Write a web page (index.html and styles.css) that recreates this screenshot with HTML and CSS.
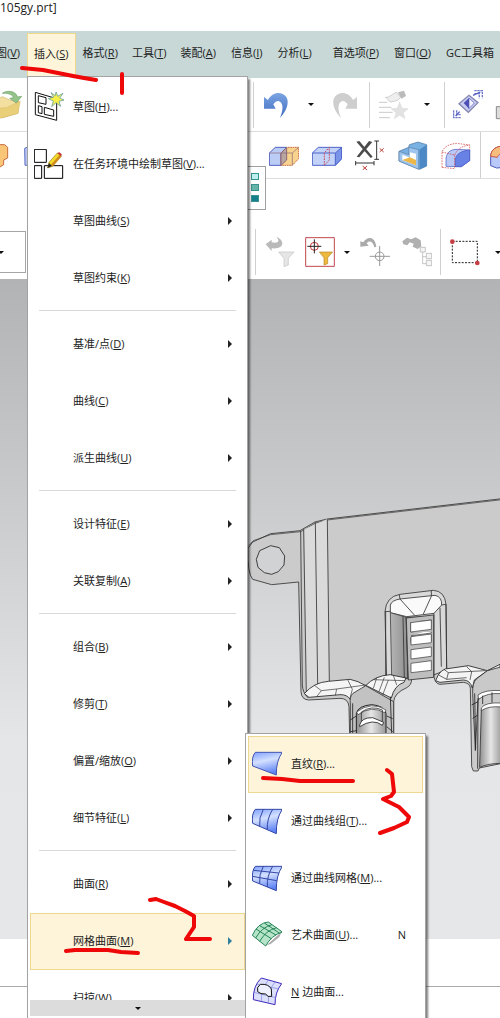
FILE: index.html
```html
<!DOCTYPE html>
<html lang="zh-CN">
<head>
<meta charset="utf-8">
<meta name="viewport" content="width=device-width, initial-scale=1">
<title>105gy.prt</title>
<link rel="stylesheet" href="styles.css">
</head>
<body>
<div class="app">
  <header class="title">105gy.prt]</header>

  <nav class="menubar">
    <button class="cut">图(<u>V</u>)</button>
    <button class="active">插入(<u>S</u>)</button>
    <button>格式(<u>R</u>)</button>
    <button>工具(<u>T</u>)</button>
    <button>装配(<u>A</u>)</button>
    <button>信息(<u>I</u>)</button>
    <button>分析(<u>L</u>)</button>
    <button class="wide">首选项(<u>P</u>)</button>
    <button>窗口(<u>O</u>)</button>
    <button>GC工具箱</button>
  </nav>

  <div class="bar bar-main">
    <div class="side">
      <button class="icon" aria-label="打开"><svg viewBox="-20 265 90 90">
        <path d="M-20 300L8 285 30 295 58 300 55 335 10 348-20 350Z" fill="#f3dfa0" stroke="#d3b866" stroke-width="2"/>
        <path d="M-20 320L20 318 62 298 55 335 8 348-20 349Z" fill="#e9cf78" stroke="#c9ad58"/>
        <path d="M8 275C22 264 50 268 53 286L66 284 50 304 30 290 42 288C36 276 22 274 8 275Z" fill="#94c48a" stroke="#6fa26a" stroke-width="2"/></svg></button>
    </div>
    <i class="sep"></i>
    <button class="icon" aria-label="撤销"><svg viewBox="36 270 90 90">
      <defs><linearGradient id="undo" x2="0" y2="1"><stop stop-color="#7ba4e2"/><stop offset="1" stop-color="#3f6cc0"/></linearGradient></defs>
      <path d="M42 291L54 300C64 282 82 275 98 282C119 291 120 322 90 354C99 332 101 312 90 305C82 300 75 307 70 313L77 326 42 326Z" fill="url(#undo)"/></svg></button>
    <button class="drop" aria-label="撤销列表"></button>
    <button class="icon" aria-label="重做"><svg viewBox="243 270 90 90">
      <path d="M324 291L312 300C302 282 284 275 268 282C247 291 246 322 276 354C267 332 265 312 276 305C284 300 291 307 296 313L289 326 324 326Z" fill="#cecece"/></svg></button>
    <i class="sep"></i>
    <button class="icon" aria-label="快速命令"><svg viewBox="384 270 90 90">
      <path d="M449 306L456 325 475 326 460 338 465 356 449 346 433 356 438 338 423 326 442 325Z" fill="#e2e2e2" stroke="#cfcfcf"/>
      <path d="M406 292C418 294 428 280 440 277L452 292 443 301 423 306C410 303 420 299 406 292Z" fill="#eee" stroke="#bbb" stroke-width="2"/>
      <path d="M444 277L462 272 468 288 454 296Z" fill="#bbb"/>
      <path d="M387 307H412M387 322H424M387 337H428M387 353H420" stroke="#cbcbcb" stroke-width="3"/></svg></button>
    <button class="drop" aria-label="命令列表"></button>
    <i class="sep"></i>
    <button class="icon" aria-label="适合窗口"><svg viewBox="612 268 90 90">
      <path d="M630 309L660 284 687 306 658 335Z" fill="#c8ccf0" stroke="#8587b2" stroke-width="4"/>
      <path d="M644 307L660 292V324Z" fill="#4b4fb5"/><path d="M660 292L676 307 660 324Z" fill="#f1f3ff" stroke="#555ab5" stroke-width="2"/>
      <path d="M676 270H700V293M676 279H691V293M614 329V351H637M623 329V342H637" fill="none" stroke="#6f7ace" stroke-width="4" stroke-dasharray="7 2"/>
      <path d="M672 284L694 274M620 346L632 333" stroke="#555fc0" stroke-width="4"/></svg></button>
    <button class="icon edge" aria-label="窗口"><svg viewBox="738 270 90 90"><path d="M742 320H780V356H742Z" fill="#ddd" stroke="#888" stroke-width="3"/></svg></button>
  </div>

  <div class="bar bar-feature">
    <div class="side">
      <button class="icon" aria-label="孔"><svg viewBox="-63 28 90 90"><path d="M-20 42H14L23 50V82L11 88V102L0 109-20 100Z" fill="#f9c576" stroke="#c96b3e" stroke-width="3"/></svg></button>
      <button class="icon" aria-label="体"><svg viewBox="56 28 90 90"><path d="M73 53L88 46H140V100L74 104Z" fill="#b9c6f3" stroke="#5d6fc4" stroke-width="3"/></svg></button>
    </div>
    <button class="icon" aria-label="修剪体"><svg viewBox="72 28 90 90">
      <g stroke-width="3"><path d="M73 67L91 50H125L108 67V104H73Z" fill="#bccdf5" stroke="#4f5fc0"/><path d="M108 67L125 50H161V84L142 104H108Z" fill="#f8d38d" stroke="#c76a42" stroke-dasharray="5 2"/>
      <path d="M108 67L125 50V88L108 104Z" fill="#b7a5a0" stroke="#8b6478"/><path d="M73 67H142L161 50M142 67V104" fill="none" stroke="#8b6478" stroke-width="2"/></g></svg></button>
    <button class="icon" aria-label="拆分体"><svg viewBox="201 28 90 90">
      <g stroke-width="3"><path d="M202 67L220 50H290V84L271 104H202Z" fill="#c3d3f8" stroke="#4e63c9"/><path d="M271 67L290 50V84L271 104Z" fill="#7a94e8" stroke="#4e63c9"/><path d="M202 67H271" stroke="#4e63c9"/>
      <path d="M238 104V67L253 50V88Z" fill="none" stroke="#c44a58" stroke-dasharray="5 3"/></g></svg></button>
    <button class="icon" aria-label="删除面"><svg viewBox="332 28 90 90">
      <path d="M336 33L345 31 385 78 379 82ZM374 31L384 34 345 80 337 78Z" fill="#4b4b4b"/>
      <path d="M397 31V86M390 31H404M390 86H404M334 97H389M334 91V104M389 91V104" fill="none" stroke="#333" stroke-width="3"/>
      <path d="M406 53L418 64M418 53L406 64M355 106L368 118M368 106L355 118" stroke="#b84238" stroke-width="3"/></svg></button>
    <button class="icon" aria-label="抽壳"><svg viewBox="460 28 90 90">
      <path d="M463 62L492 50 494 42 520 34 546 42V106L525 116 463 91Z" fill="#79b1e2" stroke="#456f9f" stroke-width="2"/>
      <path d="M463 62L492 72V50L522 57V116L463 91Z" fill="#9dc5ed" stroke="#587fa8" stroke-width="2"/>
      <path d="M473 72L496 81V65L514 69V104L473 88Z" fill="#fff"/><path d="M473 88L496 80 514 88V104Z" fill="#edb749"/><path d="M524 57L546 42V106L525 116Z" fill="#4c88c6"/></svg></button>
    <button class="icon" aria-label="偏置面"><svg viewBox="589 28 90 90">
      <path d="M604 82C608 62 620 56 638 56L675 58V90L650 108 604 107Z" fill="#b9cafa" stroke="#4553c0" stroke-width="2"/>
      <path d="M632 108V86C634 70 650 60 675 58V90L650 108Z" fill="#6881e4" stroke="#4553c0" stroke-width="2"/>
      <path d="M592 110V64C598 48 612 41 635 38L675 43V58M592 110L630 114M592 64L630 73V114M630 73C638 55 652 46 675 43" fill="none" stroke="#cf3438" stroke-width="2" stroke-dasharray="5 3"/></svg></button>
    <i class="sep"></i>
    <button class="icon" aria-label="边倒圆"><svg viewBox="735 28 90 90"><path d="M737 77C738 56 752 47 780 45V110L755 112 737 105Z" fill="#b9cafa" stroke="#4959b8" stroke-width="3"/><path d="M737 77C738 56 752 47 780 45V66C765 68 760 72 757 80Z" fill="#f7bd7d" stroke="#cc5640" stroke-width="3"/></svg></button>
  </div>

  <div class="bar bar-select">
    <div class="side"><button class="combo" aria-label="选择过滤器"></button></div>
    <i class="sep"></i>
    <button class="icon" aria-label="重置过滤器"><svg viewBox="60 321 90 90">
      <path d="M62 343L80 329V337C99 341 106 334 94 321C119 329 121 359 80 355V363Z" fill="#b9b9b9"/>
      <path d="M101 366H147L130 385V405L117 410V385Z" fill="#e6e6e6" stroke="#c2c2c2" stroke-width="2"/></svg></button>
    <button class="icon" aria-label="选择过滤"><svg viewBox="180 321 90 90">
      <path d="M182 323H268V409H182Z" fill="#fff" stroke="#c1484f" stroke-width="3"/>
      <circle cx="208" cy="349" r="12" fill="none" stroke="#c73638" stroke-width="3"/><path d="M187 349H229M208 328V370" stroke="#222" stroke-width="3"/>
      <path d="M223 366H263L248 383V401L237 405V383Z" fill="#edb83e" stroke="#bd8627" stroke-width="2"/></svg></button>
    <button class="drop" aria-label="过滤列表"></button>
    <button class="icon" aria-label="返回"><svg viewBox="342 321 90 90">
      <path d="M343 334L352 337C362 319 387 316 391 351L385 352C381 333 369 330 362 340L368 347 343 350Z" fill="#aaa"/>
      <circle cx="401" cy="379" r="13" fill="none" stroke="#999" stroke-width="3"/><path d="M371 379H432M401 348V408" stroke="#999" stroke-width="3"/></svg></button>
    <button class="icon after" aria-label="查找"><svg viewBox="471 321 90 90">
      <path d="M472 334L486 323 498 328 512 322 527 331 529 349 518 357 503 350 506 341 494 337 487 346 475 343Z" fill="#b0b0b0"/>
      <g fill="#f5f5f5" stroke="#aaa" stroke-width="2"><path d="M533 366V401H544M533 380H544" fill="none"/><path d="M526 352H541V366H526ZM544 370H560V386H544ZM544 391H560V407H544Z"/></g></svg></button>
    <i class="sep"></i>
    <button class="icon" aria-label="矩形选择"><svg viewBox="612 321 90 90">
      <path d="M619 334H694V398H619Z" fill="none" stroke="#222" stroke-width="3" stroke-dasharray="6 4"/><circle cx="619" cy="335" r="7" fill="#c63d43"/><circle cx="694" cy="399" r="7" fill="#c63d43"/></svg></button>
    <button class="drop" aria-label="选择方式"></button>
  </div>

  <main class="viewport">
    <svg class="model" viewBox="248 279 252 660" role="img" aria-label="零件模型">
      <defs>
        <linearGradient id="cyl"><stop stop-color="#909090"/><stop offset=".5" stop-color="#e6e6e6"/><stop offset="1" stop-color="#989898"/></linearGradient>
        <linearGradient id="post"><stop stop-color="#b5b5b5"/><stop offset="1" stop-color="#8f8f8f"/></linearGradient>
      </defs>
      <g transform="translate(240 480) scale(.33333)" stroke-linejoin="round" stroke-width="2.500">
        <path d="M24 205L38 186 92 161 180 152 225 126 262 117 786 56V850L718 864 714 873H700L695 860 691 625Q690 609 670 607L600 613Q585 611 582 590L515 596Q515 616 500 623 462 640 461 665V860H331L327 680Q325 655 300 655L205 660Q184 658 183 635L176 306 95 314 38 298Q22 280 24 205Z" fill="#cbcbcb" stroke="#333"/>
        <path d="M26 197L40 182 92 164 182 155 227 129 262 120 786 59" fill="none" stroke="#333" stroke-width="2"/>
        <path d="M92 197L118 203 134 228 132 255 115 275 95 283 73 278 54 262 49 238 59 212Z" fill="#d1d2d3" stroke="#222"/>
        <path d="M193 148L262 117 268 600 245 612 199 645Z" fill="#dadada"/>
        <path d="M182 153L187 615Q188 638 205 654M191 148L199 640M226 127L233 612M262 118L268 605" fill="none" stroke="#333" stroke-width="2.500"/>
        <path d="M435 395Q438 350 480 343L580 331Q614 333 618 373L620 570 580 585V410L498 412 505 595 440 605Z" fill="#d9d9d9" stroke="#333"/>
        <path d="M451 398V375Q455 361 480 357L585 346Q606 350 605 375L582 400 500 410Z" fill="#fafafa" stroke="#333"/>
        <path d="M478 345L480 357 523 405M574 332V349L550 402M605 375L618 373M435 395L451 394" fill="none" stroke="#333"/>
        <path d="M451 398L500 412 503 595 455 590Z" fill="url(#post)" stroke="#444"/>
        <path d="M437 395V588M489 409L493 596M498 412L505 600M582 400V590M600 383L604 560M618 373L620 565" fill="none" stroke="#333"/>
        <path d="M499 414L581 405V592L505 600Z" fill="#bebebe" stroke="#333"/>
        <g fill="#fff" stroke="#333" stroke-width="2"><path d="M512 427L574 420V448L512 455ZM513 473L574 465V483L513 488ZM513 430L574 422V449L513 456ZM513 467L574 459V450L574 449"/></g>
        <path d="M512 422H575V456H512Z" fill="#bebebe"/>
        <g fill="#fff" stroke="#333" stroke-width="2"><path d="M512 428L574 420V448L512 456ZM513 470L574 462V488L513 495ZM513 509L574 501V529L513 537ZM513 550L574 542V571L513 578Z"/></g>
        <path d="M193 641Q222 607 265 604L330 598Q355 603 377 617Q405 587 450 584L498 594 492 607Q463 616 454 654L377 616 332 660Q322 643 300 644L207 652Z" fill="#f5f5f5" stroke="#222"/>
        <path d="M377 617L339 640Q328 650 331 672V860H461V665Z" fill="#c2c2c2" stroke="#333"/>
        <path d="M222 615L244 632 230 650M244 632L290 627 377 615M290 627L286 646M323 599L337 628 330 655M410 594L400 625M433 592L417 635M445 600L428 645M460 586L470 615M400 599L495 602" fill="none" stroke="#333" stroke-width="2"/>
        <path d="M349 760V700Q355 677 395 674 433 677 438 700V760" fill="url(#cyl)" stroke="#222" stroke-width="3"/>
        <path d="M350 696Q395 662 438 690L434 698Q395 675 354 704Z" fill="#fff" stroke="#333" stroke-width="2"/>
        <path d="M364 730V696Q395 675 427 690V730" fill="none" stroke="#333"/>
        <path d="M359 735Q365 712 398 713L431 727 427 736Q400 714 359 740Z" fill="#fff" stroke="#222"/>
        <path d="M331 720L349 708M331 755L349 752M440 708L458 716M440 740L458 755M338 670V760M451 650L455 760" fill="none" stroke="#222"/>
        <path d="M587 602Q600 563 630 565L685 557 742 572 780 553V570L742 572 703 600 697 625Q691 600 670 600L600 607Z" fill="#f4f4f4" stroke="#222"/>
        <path d="M596 585L620 598 680 593M612 568L625 578 735 572M625 578L620 598M680 560L695 575 690 600" fill="none" stroke="#222" stroke-width="2"/>
        <path d="M742 572L709 597Q697 609 698 640L706 812 714 660Q730 634 786 635V560Z" fill="#c9c9c9" stroke="#333"/>
        <path d="M719 855L724 691Q735 670 786 670V850Q744 850 719 862Z" fill="url(#cyl)" stroke="#333"/>
        <path d="M714 645Q735 628 786 632V641Q740 637 716 658ZM724 684Q735 666 786 669V681Q745 677 724 692Z" fill="#fff" stroke="#222" stroke-width="2"/>
        <path d="M695 675L714 665M698 715L712 706M704 640L707 808M728 647V672M756 637V668M714 654L713 866" fill="none" stroke="#222"/>
      </g>
    </svg>
  </main>
  <footer class="status"></footer>

  <div class="swatches"><i class="light"></i><i class="mid"></i><i class="dark"></i></div>

  <div class="menu main-menu">
    <div class="items">
      <button class="item"><svg viewBox="102 277 90 90">
        <path d="M106 278L170 297V362L106 345ZM115 288L138 294V314L115 309ZM115 318L126 321V342L115 339ZM133 323L161 331V350L133 344Z" fill="none" stroke="#111" stroke-width="3"/>
        <path d="M168 275L173 290 189 281 179 295 192 301 177 305 182 320 168 309 155 321 160 304 145 297 161 292 153 279 166 288Z" fill="#f7f04c" stroke="#4b8f9c" stroke-width="2"/></svg><span>草图(<u>H</u>)...</span></button>
      <button class="item"><svg viewBox="102 57 90 90">
        <path d="M103 58H139V97H103ZM103 107H125V145H103ZM133 107H188V145H133Z" fill="#fff" stroke="#000" stroke-width="3"/>
        <path d="M147 97L172 69 184 79 158 109 143 114Z" fill="#f5d92b" stroke="#9d8125" stroke-width="2"/><path d="M153 104L179 74 184 79 158 109Z" fill="#d08a1a"/><path d="M172 69L178 67 185 73 184 79Z" fill="#c3272c"/><path d="M147 99L156 108 142 114Z" fill="#222"/></svg><span>在任务环境中绘制草图(<u>V</u>)...</span></button>
      <button class="item sub"><span>草图曲线(<u>S</u>)</span></button>
      <button class="item sub"><span>草图约束(<u>K</u>)</span></button>
      <hr>
      <button class="item sub"><span>基准/点(<u>D</u>)</span></button>
      <button class="item sub"><span>曲线(<u>C</u>)</span></button>
      <button class="item sub"><span>派生曲线(<u>U</u>)</span></button>
      <hr>
      <button class="item sub"><span>设计特征(<u>E</u>)</span></button>
      <button class="item sub"><span>关联复制(<u>A</u>)</span></button>
      <hr>
      <button class="item sub"><span>组合(<u>B</u>)</span></button>
      <button class="item sub"><span>修剪(<u>T</u>)</span></button>
      <button class="item sub"><span>偏置/缩放(<u>O</u>)</span></button>
      <button class="item sub"><span>细节特征(<u>L</u>)</span></button>
      <hr>
      <button class="item sub"><span>曲面(<u>R</u>)</span></button>
      <button class="item sub hot"><span>网格曲面(<u>M</u>)</span></button>
      <button class="item sub"><span>扫掠(<u>W</u>)</span></button>
    </div>
    <button class="scroll" aria-label="向下滚动"></button>
  </div>

  <div class="menu sub-menu">
    <svg class="defs" aria-hidden="true"><defs>
      <linearGradient id="sheet" x2="0.300" y2="1"><stop stop-color="#7fa0ff"/><stop offset=".45" stop-color="#d3e0ff"/><stop offset="1" stop-color="#5f83f4"/></linearGradient>
    </defs></svg>
    <button class="item hot"><svg viewBox="36 60 90 90"><path d="M46 70H127Q108 95 109 138L38 111Q34 84 46 70Z" fill="url(#sheet)" stroke="#4255b5" stroke-width="3"/></svg><span>直纹(<u>R</u>)...</span></button>
    <button class="item"><svg viewBox="36 231 90 90"><path d="M46 241H127Q108 268 109 314L38 283Q34 255 46 241Z" fill="url(#sheet)" stroke="#3346a5" stroke-width="3"/><path d="M70 241Q56 266 59 292M98 241Q80 270 82 302" fill="none" stroke="#3346a5" stroke-width="3"/></svg><span>通过曲线组(<u>T</u>)...</span></button>
    <button class="item"><svg viewBox="36 12 90 90"><path d="M46 22H127Q108 49 109 95L38 66Q34 36 46 22Z" fill="url(#sheet)" stroke="#3346a5" stroke-width="3"/><path d="M70 22Q56 47 59 74M98 22Q80 51 82 84M41 34L116 42M37 52L110 65" fill="none" stroke="#3346a5" stroke-width="3"/></svg><span>通过曲线网格(<u>M</u>)...</span></button>
    <button class="item"><svg viewBox="36 183 90 90"><path d="M80 259L125 218 118 234 92 255Z" fill="#aaa"/><path d="M37 229Q53 192 85 189L127 219Q94 229 77 261Z" fill="#b5e4c9" stroke="#25845a" stroke-width="3"/><path d="M47 237Q66 204 96 197M59 247Q78 214 110 206M48 210L94 239M59 200L108 228M73 192L119 223" fill="none" stroke="#25845a" stroke-width="3"/></svg><span>艺术曲面(<u>U</u>)...</span><kbd>N</kbd></button>
    <button class="item"><svg viewBox="36 354 90 90"><path d="M64 357L125 374Q105 399 105 437L40 422Q39 380 64 357Z" fill="#dde0fb" stroke="#3e28bd" stroke-width="3"/><path d="M85 363Q63 390 64 427M105 369Q84 395 85 432M50 375L116 390M41 400L107 416" fill="none" stroke="#7780df" stroke-width="2"/><path d="M61 376Q86 374 94 390L95 412Q83 416 77 405 61 406 53 398 49 384 61 376Z" fill="#eff1ff" stroke="#111" stroke-width="3"/></svg><span><u>N</u> 边曲面...</span></button>
  </div>

  <svg class="marks" viewBox="0 0 500 1018" aria-hidden="true">
    <path d="M22 68L43 70 58 73 73 76 84 78 96 80M122 74V93M150 900L156 899 164 902 175 906 185 911 194 916V927L186 939H210M66 951L75 950H108L121 952 138 953M263 778L282 779 300 781H353M387 770L392 774 394 792 391 796 383 799 399 807 409 817 407 822 394 828 380 833"/>
  </svg>
</div>
</body>
</html>
```

FILE: styles.css
```css
* { box-sizing: border-box; }

body {
  margin: 0;
  background: #fff;
  color: #222;
  font: 11px/16px "Open Sans", "Noto Sans CJK SC", sans-serif;
}

button {
  margin: 0;
  padding: 0;
  border: 0;
  background: none;
  color: inherit;
  font: inherit;
}

svg { display: block; }
u { text-underline-offset: 1px; }

.app {
  position: relative;
  display: flex;
  flex-direction: column;
  min-height: 100vh;
  overflow: hidden;
}

.title {
  height: 31px;
  font-size: 12px;
}

.menubar {
  display: flex;
  height: 47px;
  padding: 2px 0;
  background: #c8d8d7;
  overflow: hidden;
}
.menubar button {
  flex: none;
  padding: 0 7px 3px;
  white-space: nowrap;
}
.menubar button:nth-child(n+5) { padding-right: 8px; }
.menubar .cut { margin-left: -11px; }
.menubar .wide { margin-left: 6px; }
.menubar .active {
  border: 1px solid #f0d98c;
  border-bottom: 0;
  padding: 0 6px 2px;
  background: #fdf4d9;
}

.bar {
  display: flex;
  align-items: center;
  overflow: hidden;
}
.bar > * { flex: none; }
.side {
  display: flex;
  width: 248px;
}
.icon, .icon svg {
  width: 30px;
  height: 30px;
}
.sep {
  width: 1px;
  height: 46px;
  background: #d0d0d0;
}
.drop {
  display: grid;
  place-items: center;
  width: 38px;
  height: 30px;
}
.drop::before, .scroll::before {
  content: "";
  border: 3px solid transparent;
  border-top-color: #111;
  border-bottom: 0;
}

.bar-main { height: 53px; }
.bar-main .side .icon { margin-left: -7px; }
.bar-main .sep { margin: 0 8px 0 9px; }
.bar-main .side + .sep { margin-left: 5px; }
.bar-main .drop + .sep { margin-left: -2px; }
.bar-main .edge { margin-left: 12px; }

.bar-feature {
  height: 48px;
  gap: 13px;
  border-top: 1px solid #ddd;
  border-bottom: 1px solid #ddd;
}
.bar-feature .side {
  width: 256px;
  gap: 10px;
}
.bar-feature .side .icon:first-child { margin-left: -21px; }
.bar-feature .sep { margin: 0 -4px; }

.bar-select {
  height: 100px;
  padding-top: 46px;
}
.bar-select .icon { margin-left: 10px; }
.bar-select .side + .sep { margin: 0 -1px 0 7px; }
.bar-select .drop { width: 24px; }
.bar-select .drop + .icon { margin-left: 1px; }
.bar-select .after { margin: 0 8px 0 12px; }
.bar-select .sep ~ .sep + .icon { margin-left: 9px; }
.bar-select .icon + .drop:last-child { margin-left: 6px; }
.combo {
  width: 26px;
  height: 42px;
  border: 1px solid #a5a5a5;
  border-left: 0;
  text-align: left;
}
.combo::before {
  content: "";
  display: block;
  width: 0;
  margin-left: -2px;
  border: 3px solid transparent;
  border-top-color: #111;
  border-bottom: 0;
}

.viewport {
  flex: 1;
  padding-left: 248px;
  background: linear-gradient(#b2b3b5, #cbcccd 35%, #e5e6e8 70%, #e6e7e9);
}
.model {
  width: 252px;
  height: 660px;
}

.status {
  height: 79px;
  background: linear-gradient(#aaa, #aaa) 0 47px / 100% 1px no-repeat #fff;
}

.swatches {
  position: absolute;
  top: 166px;
  left: 240px;
  display: flex;
  flex-direction: column;
  gap: 4px;
  width: 26px;
  padding: 6px 0 7px 10px;
  border: 1px solid #a0a0a0;
  background: #fff;
}
.swatches i {
  width: 8px;
  height: 7px;
  border: 1px solid #3b9292;
}
.light { background: #bdf0ed; }
.mid { background: #64b5a8; }
.dark { background: #147e8b; }

.menu {
  position: absolute;
  padding: 2px;
  border: 1px solid #a3a3a3;
  background: #fff;
  box-shadow: 2px 3px 2px rgba(0, 0, 0, 0.5);
}
.main-menu {
  top: 76px;
  bottom: 0;
  left: 27px;
  display: flex;
  flex-direction: column;
  width: 221px;
  border-bottom: 0;
}
.sub-menu {
  top: 733px;
  bottom: -10px;
  left: 245px;
  width: 181px;
}
.items {
  flex: 1;
  min-height: 0;
  overflow: hidden;
}
.item {
  display: grid;
  grid-template-columns: 30px 1fr auto;
  align-items: center;
  column-gap: 9px;
  width: 100%;
  height: 57px;
  padding: 0 12px 2px 3px;
  border: 1px solid transparent;
  text-align: left;
  white-space: nowrap;
}
.item svg {
  width: 30px;
  height: 30px;
}
.item span { grid-column: 2; }
.sub::after {
  content: "";
  border: 4px solid transparent;
  border-left-color: #222;
  border-right: 0;
}
.hot {
  border-color: #ecd88f;
  background: #fdf4d9;
}
.hot.sub::after { border-left-color: #2f7f9d; }
.main-menu hr {
  height: 1px;
  margin: 3px 9px 5px;
  border: 0;
  background: #d9d9d9;
}
.scroll {
  display: grid;
  place-items: center;
  flex: none;
  height: 16px;
  background: #dcdcdc;
}
kbd {
  padding-right: 4px;
  font: inherit;
}
.defs {
  position: absolute;
  width: 0;
  height: 0;
}

.marks {
  position: absolute;
  top: 0;
  left: 0;
  width: 500px;
  height: 1018px;
  pointer-events: none;
  fill: none;
  stroke: #ee0808;
  stroke-width: 4;
  stroke-linecap: round;
  stroke-linejoin: round;
}
```
